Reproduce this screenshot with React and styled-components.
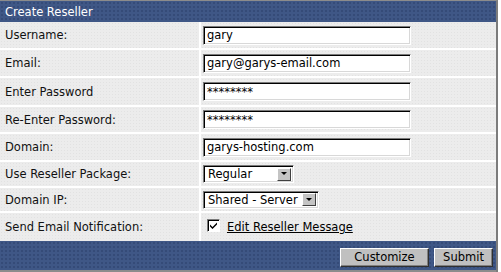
import React from "react";
import styled, { createGlobalStyle, css } from "styled-components";

const Global = createGlobalStyle`
  html, body { margin: 0; padding: 0; background: #ffffff; }
  body { font-family: "DejaVu Sans", Verdana, sans-serif; }
`;

const blueBg = css`
  background-color: #3f5786;
  background-image: radial-gradient(circle, #354b78 0.8px, transparent 1px);
  background-size: 4px 4px;
`;

const Panel = styled.form`
  width: 496px;
  border-top: 1px solid #8c8c8c;
  border-right: 2px solid #7c7c7c;
  display: flex;
  flex-direction: column;
  margin: 0;
`;

const Header = styled.div`
  ${blueBg};
  height: 21px;
  display: flex;
  align-items: center;
  padding-left: 5px;
  color: #ffffff;
  font-size: 11.5px;
`;

const Rows = styled.div`
  display: flex;
  flex-direction: column;
  gap: 2px;
  background: #ffffff;
`;

const Row = styled.div`
  display: grid;
  grid-template-columns: 199px 1fr;
  column-gap: 2px;
  height: ${(p) => p.$h}px;
`;

const cellBg = css`
  background-color: #ececec;
  background-image: radial-gradient(circle, #e2e2e2 0.7px, transparent 0.9px);
  background-size: 3px 3px;
`;

const Label = styled.div`
  ${cellBg};
  display: flex;
  align-items: center;
  padding-left: 5px;
  font-size: 11.5px;
  color: #111;
`;

const Value = styled.div`
  ${cellBg};
  display: flex;
  align-items: center;
  padding-left: 2px;
  gap: 7px;
`;

const inset = css`
  box-sizing: border-box;
  border: 1px solid;
  border-color: #7a7a7a #ffffff #ffffff #7a7a7a;
  box-shadow: inset 1px 1px 0 #000000, inset -1px -1px 0 #d8d8d8;
  background: #ffffff;
`;

const TextInput = styled.input`
  ${inset};
  width: 208px;
  height: 19px;
  margin: 0;
  padding: 0 0 0 3px;
  font-family: "DejaVu Sans", Verdana, sans-serif;
  font-size: 11.5px;
  color: #000;
  outline: none;
`;

const Combo = styled.div`
  ${inset};
  width: ${(p) => p.$w}px;
  height: ${(p) => p.$hh}px;
  display: flex;
  align-items: center;
  padding: 0 2px 0 1px;
`;

const NativeSelect = styled.select`
  appearance: none;
  -webkit-appearance: none;
  border: none;
  background: transparent;
  flex: 1;
  min-width: 0;
  height: 16px;
  line-height: 16px;
  margin: 0;
  padding: 0 0 0 3px;
  font-family: "DejaVu Sans", Verdana, sans-serif;
  font-size: 11.5px;
  color: #000;
  outline: none;
`;

const ArrowBox = styled.span`
  box-sizing: border-box;
  width: 14px;
  height: 13px;
  background: #c4c4c4;
  border: 1px solid;
  border-color: #ffffff #404040 #404040 #ffffff;
  display: flex;
  align-items: center;
  justify-content: center;
  flex: none;
`;

const Check = styled.span`
  box-sizing: border-box;
  width: 13px;
  height: 13px;
  margin-left: 4px;
  border: 1px solid;
  border-color: #7a7a7a #ffffff #ffffff #7a7a7a;
  box-shadow: inset 1px 1px 0 #000000;
  background: #ffffff;
  display: flex;
  align-items: center;
  justify-content: center;
  margin-top: -3px;
`;

const LinkText = styled.a`
  font-size: 11.5px;
  color: #000;
  text-decoration: underline;
  font-family: "DejaVu Sans", Verdana, sans-serif;
`;

const Footer = styled.div`
  ${blueBg};
  height: 29px;
  border-bottom: 2px solid #8c8c8c;
  display: flex;
  align-items: center;
  justify-content: flex-end;
  padding-right: 3px;
  gap: 5px;
`;

const Button = styled.button`
  box-sizing: border-box;
  height: 19px;
  width: ${(p) => p.$w}px;
  margin: 0;
  padding: 0;
  background: #c0c0c0;
  border: 1px solid;
  border-color: #ffffff #303030 #303030 #ffffff;
  box-shadow: inset -1px -1px 0 #808080;
  font-family: "DejaVu Sans", Verdana, sans-serif;
  font-size: 11.5px;
  color: #000;
  margin-top: 3px;
`;

const Arrow = () => (
  <svg width="6" height="4" viewBox="0 0 6 4">
    <path d="M0 0h6L3 3z" fill="#000" />
  </svg>
);

const Tick = () => (
  <svg width="9" height="9" viewBox="0 0 9 9">
    <path d="M1 3.5L3.5 6 8 1.5v2L3.5 8 1 5.5z" fill="#000" />
  </svg>
);

const Select = ({ w, hh, value }) => (
  <Combo $w={w} $hh={hh}>
    <NativeSelect defaultValue={value}>
      <option>{value}</option>
    </NativeSelect>
    <ArrowBox>
      <Arrow />
    </ArrowBox>
  </Combo>
);

export default function App() {
  return (
    <>
      <Global />
      <Panel onSubmit={(e) => e.preventDefault()}>
        <Header>Create Reseller</Header>
        <Rows>
          <Row $h={26}>
            <Label>Username:</Label>
            <Value>
              <TextInput defaultValue="gary" />
            </Value>
          </Row>
          <Row $h={26}>
            <Label>Email:</Label>
            <Value>
              <TextInput defaultValue="gary@garys-email.com" />
            </Value>
          </Row>
          <Row $h={27}>
            <Label>Enter Password</Label>
            <Value>
              <TextInput type="text" defaultValue="********" />
            </Value>
          </Row>
          <Row $h={25}>
            <Label>Re-Enter Password:</Label>
            <Value>
              <TextInput type="text" defaultValue="********" />
            </Value>
          </Row>
          <Row $h={26}>
            <Label>Domain:</Label>
            <Value>
              <TextInput defaultValue="garys-hosting.com" />
            </Value>
          </Row>
          <Row $h={24}>
            <Label>Use Reseller Package:</Label>
            <Value>
              <Select w={91} hh={18} value="Regular" />
            </Value>
          </Row>
          <Row $h={23}>
            <Label>Domain IP:</Label>
            <Value>
              <Select w={116} hh={18} value="Shared - Server" />
            </Value>
          </Row>
          <Row $h={28}>
            <Label>Send Email Notification:</Label>
            <Value>
              <Check>
                <Tick />
              </Check>
              <LinkText href="#">Edit Reseller Message</LinkText>
            </Value>
          </Row>
        </Rows>
        <Footer>
          <Button $w={89} type="button">Customize</Button>
          <Button $w={59} type="submit">Submit</Button>
        </Footer>
      </Panel>
    </>
  );
}
